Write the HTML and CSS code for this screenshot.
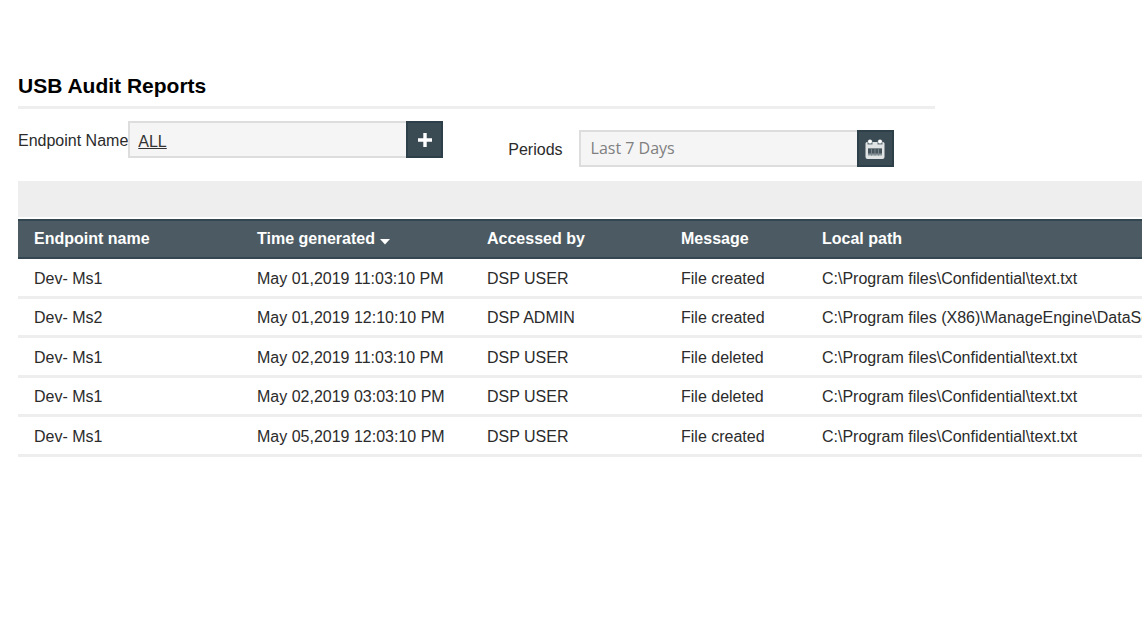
FILE: index.html
```html
<!DOCTYPE html>
<html lang="en">
<head>
<meta charset="utf-8">
<title>USB Audit Reports</title>
<link rel="stylesheet" href="styles.css">
</head>
<body>
<main class="report">
  <h1 class="report-title">USB Audit Reports</h1>
  <form class="filters">
    <div class="field field-endpoint">
      <label for="endpoint">Endpoint Name</label>
      <div class="control">
        <input class="input input-link" id="endpoint" type="text" value="ALL">
        <button class="icon-button" type="button" aria-label="Add endpoint">
          <svg width="16" height="16" viewBox="0 0 16 16" aria-hidden="true"><path d="M6.3 1h3.4v5.3H15v3.4H9.7V15H6.3V9.7H1V6.3h5.3z" fill="#fff"/></svg>
        </button>
      </div>
    </div>
    <div class="field field-period">
      <label for="period">Periods</label>
      <div class="control">
        <input class="input input-period" id="period" type="text" value="Last 7 Days">
        <button class="icon-button" type="button" aria-label="Choose dates">
          <svg width="22" height="22" viewBox="0 0 22 22" aria-hidden="true">
            <path d="M3 4h16a1.500 1.500 0 0 1 1.500 1.500V19a2 2 0 0 1-2 2h-15a2 2 0 0 1-2-2V5.500A1.500 1.500 0 0 1 3 4z" fill="#dfe3e4"/>
            <path d="M4 10.500h14v7H4z" fill="#87949a"/>
            <path d="M4 10.500h14v5H4z" fill="#46545b"/>
            <path d="M7.500 10.500v7M11 10.500v7M14.500 10.500v7" stroke="#76848a" stroke-width="1"/>
            <path d="M3.500 2.500h5v4h-5zM13.500 2.500h5v4h-5z" fill="#68777e"/>
            <circle cx="6" cy="3.500" r="2" fill="#fff"/>
            <circle cx="16" cy="3.500" r="2" fill="#fff"/>
          </svg>
        </button>
      </div>
    </div>
  </form>
  <div class="toolbar"></div>
  <table class="audit">
    <colgroup>
      <col class="col-endpoint"><col class="col-time"><col class="col-user"><col class="col-message"><col>
    </colgroup>
    <thead>
      <tr>
        <th>Endpoint name</th>
        <th aria-sort="descending">Time generated <svg class="sort" width="11" height="6" viewBox="0 0 11 6" aria-hidden="true"><path d="M1 0h10L6 5.500z" fill="#fff"/></svg></th>
        <th>Accessed by</th><th>Message</th><th>Local path</th>
      </tr>
    </thead>
    <tbody>
      <tr><td>Dev- Ms1</td><td>May 01,2019 11:03:10 PM</td><td>DSP USER</td><td>File created</td><td>C:\Program files\Confidential\text.txt</td></tr>
      <tr><td>Dev- Ms2</td><td>May 01,2019 12:10:10 PM</td><td>DSP ADMIN</td><td>File created</td><td>C:\Program files (X86)\ManageEngine\DataSe</td></tr>
      <tr><td>Dev- Ms1</td><td>May 02,2019 11:03:10 PM</td><td>DSP USER</td><td>File deleted</td><td>C:\Program files\Confidential\text.txt</td></tr>
      <tr><td>Dev- Ms1</td><td>May 02,2019 03:03:10 PM</td><td>DSP USER</td><td>File deleted</td><td>C:\Program files\Confidential\text.txt</td></tr>
      <tr><td>Dev- Ms1</td><td>May 05,2019 12:03:10 PM</td><td>DSP USER</td><td>File created</td><td>C:\Program files\Confidential\text.txt</td></tr>
    </tbody>
  </table>
</main>
</body>
</html>
```
FILE: styles.css
```css
* { box-sizing: border-box; }

body {
  margin: 0;
  background: #fff;
  color: #2b2b2b;
  font: 16px/20px "Liberation Sans", Arial, sans-serif;
}

.report { padding: 72px 0 0 18px; overflow: hidden; }

.report-title {
  width: 82%;
  max-width: 917px;
  margin: 0;
  padding-bottom: 6px;
  border-bottom: 3px solid #eee;
  color: #000;
  font-size: 21px;
  line-height: 28px;
}

.filters {
  display: flex;
  align-items: flex-start;
  gap: 65px;
  padding: 12px 0 14px;
}

.field { display: flex; align-items: center; }
.field-period { gap: 16px; padding-top: 9px; }
.field label { padding-top: 2px; }

.control { display: flex; }

.input {
  width: 278px;
  height: 37px;
  padding: 0 10px;
  border: 2px solid #ddd;
  border-right: 0;
  border-radius: 0;
  background: #f5f5f5;
  color: #333;
  font: inherit;
}

.input-link { padding: 4px 8px 0; text-decoration: underline; }
.input-period { padding-bottom: 2px; color: #808080; font: 16px/20px "Open Sans", sans-serif; }

.icon-button {
  display: flex;
  align-items: center;
  justify-content: center;
  width: 37px;
  height: 37px;
  padding: 0;
  border: 2px solid #2d3f49;
  background: #3b4b54;
}

.toolbar { height: 36px; margin-bottom: 2px; background: #eee; }

.audit { width: 100%; table-layout: fixed; border-collapse: separate; border-spacing: 0; }
.col-endpoint { width: 223px; }
.col-time { width: 230px; }
.col-user { width: 194px; }
.col-message { width: 141px; }

.audit th,
.audit td {
  height: 39px;
  padding: 0 0 0 16px;
  text-align: left;
  white-space: nowrap;
}

.audit th {
  height: 40px;
  border: solid #344751;
  border-width: 2px 0;
  background: #4c5b63;
  color: #fff;
}

.audit td { padding-top: 2px; border-bottom: 3px solid #eee; }
.audit tbody tr:nth-child(odd) td { height: 40px; }

.sort { vertical-align: -1px; }
```
